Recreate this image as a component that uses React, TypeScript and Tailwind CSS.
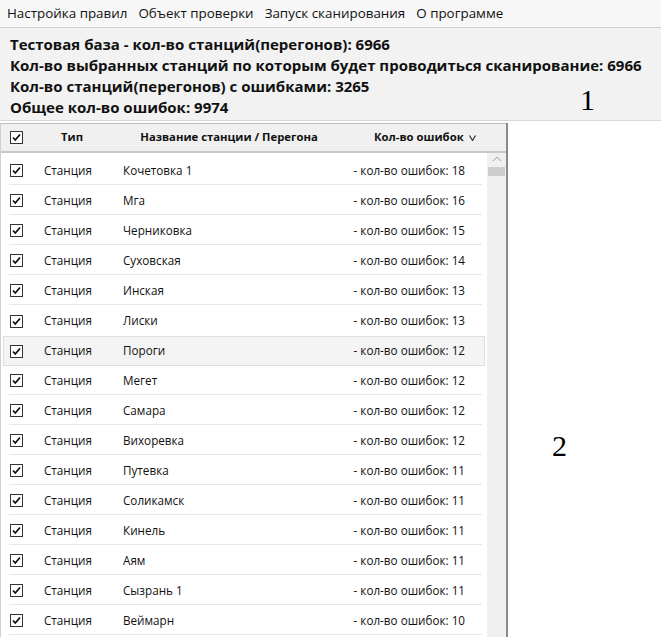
import React from 'react'

const rows: [string, number][] = [
  ['Кочетовка 1', 18],
  ['Мга', 16],
  ['Черниковка', 15],
  ['Суховская', 14],
  ['Инская', 13],
  ['Лиски', 13],
  ['Пороги', 12],
  ['Мегет', 12],
  ['Самара', 12],
  ['Вихоревка', 12],
  ['Путевка', 11],
  ['Соликамск', 11],
  ['Кинель', 11],
  ['Аям', 11],
  ['Сызрань 1', 11],
  ['Веймарн', 10],
]

function Check() {
  return (
    <div className="w-[13px] h-[13px] border border-[#333] bg-white flex items-center justify-center">
      <svg width="11" height="11" viewBox="0 0 11 11" fill="none">
        <path d="M2 5.5 L4.3 8 L9 2.5" stroke="#111" strokeWidth={1.8} />
      </svg>
    </div>
  )
}

const menu = ['Настройка правил', 'Объект проверки', 'Запуск сканирования', 'О программе']

export default function App() {
  return (
    <div
      className="relative w-[661px] h-[637px] overflow-hidden flex flex-col bg-white text-[#111]"
      style={{ fontFamily: '"Open Sans", "Noto Sans", sans-serif' }}
    >
      {/* Menu */}
      <div className="h-[28px] flex items-center gap-[11px] px-[7px] bg-[#f7f7f7] border-b border-[#cfcfcf] text-[13.4px]">
        {menu.map((m) => (
          <span key={m}>{m}</span>
        ))}
      </div>

      {/* Info panel */}
      <div className="h-[93px] bg-[#f2f2f2] border-b border-[#d9d9d9] flex">
        <div className="pl-[10px] pt-[6px] text-[15px] font-bold leading-[21px] whitespace-nowrap">
          <div>Тестовая база - кол-во станций(перегонов): 6966</div>
          <div>Кол-во выбранных станций по которым будет проводиться сканирование: 6966</div>
          <div>Кол-во станций(перегонов) с ошибками: 3265</div>
          <div>Общее кол-во ошибок: 9974</div>
        </div>
      </div>

      <div className="flex flex-1 min-h-0">
        {/* Table */}
        <div className="w-[508px] flex flex-col border-r-2 border-[#8a8a8a] border-l border-l-[#cfcfcf] mt-[2px]">
          <div className="h-[30px] flex items-center bg-[#f0f0f0] border-t border-[#bdbdbd] border-b-2 border-b-[#c8c8c8] text-[11.3px] font-bold">
            <div className="w-[36px] pl-[9px]">
              <Check />
            </div>
            <div className="w-[70px] text-center">Тип</div>
            <div className="w-[244px] text-center">Название станции / Перегона</div>
            <div className="flex items-center gap-[5px] pl-[23px]">
              <span>Кол-во ошибок</span>
              <svg width="7" height="6" viewBox="0 0 7 6" fill="none">
                <path d="M0.5 0.5 L3.5 5.5 L6.5 0.5" stroke="#222" strokeWidth={1.1} />
              </svg>
            </div>
          </div>
          <div className="flex flex-1 min-h-0">
            <div className="flex-1 overflow-hidden pt-[3px] text-[11.7px]">
              {rows.map(([name, n], i) => (
                <div
                  key={name}
                  className={
                    i === 6
                      ? 'h-[30px] mx-[2px] bg-[#f4f4f4] border border-[#dedede]'
                      : 'h-[30px] mx-[2px] border border-transparent'
                  }
                >
                  <div
                    className={
                      i === 6 || i === 5
                        ? 'h-full flex items-center ml-[5px] mr-[2px]'
                        : 'h-full flex items-center ml-[5px] mr-[2px] border-b border-[#e6e6e6]'
                    }
                  >
                    <div className="w-[29px] pl-[1px]">
                      <Check />
                    </div>
                    <div className="w-[85px] pl-[6px]">Станция</div>
                    <div className="flex-1">{name}</div>
                    <div className="pr-[17px]">- кол-во ошибок: {n}</div>
                  </div>
                </div>
              ))}
            </div>
            <div className="w-[19px] bg-[#f0f0f0] flex flex-col items-center pt-[3px]">
              <svg width="10" height="6" viewBox="0 0 10 6" fill="none">
                <path d="M1 5 L5 1 L9 5" stroke="#a0a0a0" strokeWidth={1} />
              </svg>
              <div className="w-[17px] h-[9px] bg-[#cdcdcd] mt-[5px]" />
            </div>
          </div>
        </div>

        {/* Right area */}
        <div className="flex-1 pl-[44px] pt-[305px]">
          <span className="text-[30px] leading-[40px] text-black" style={{ fontFamily: '"Liberation Serif", serif' }}>
            2
          </span>
        </div>
      </div>

      <span
        className="absolute left-[580px] top-[77px] text-[30px] text-black"
        style={{ fontFamily: '"Liberation Serif", serif' }}
      >
        1
      </span>
    </div>
  )
}
